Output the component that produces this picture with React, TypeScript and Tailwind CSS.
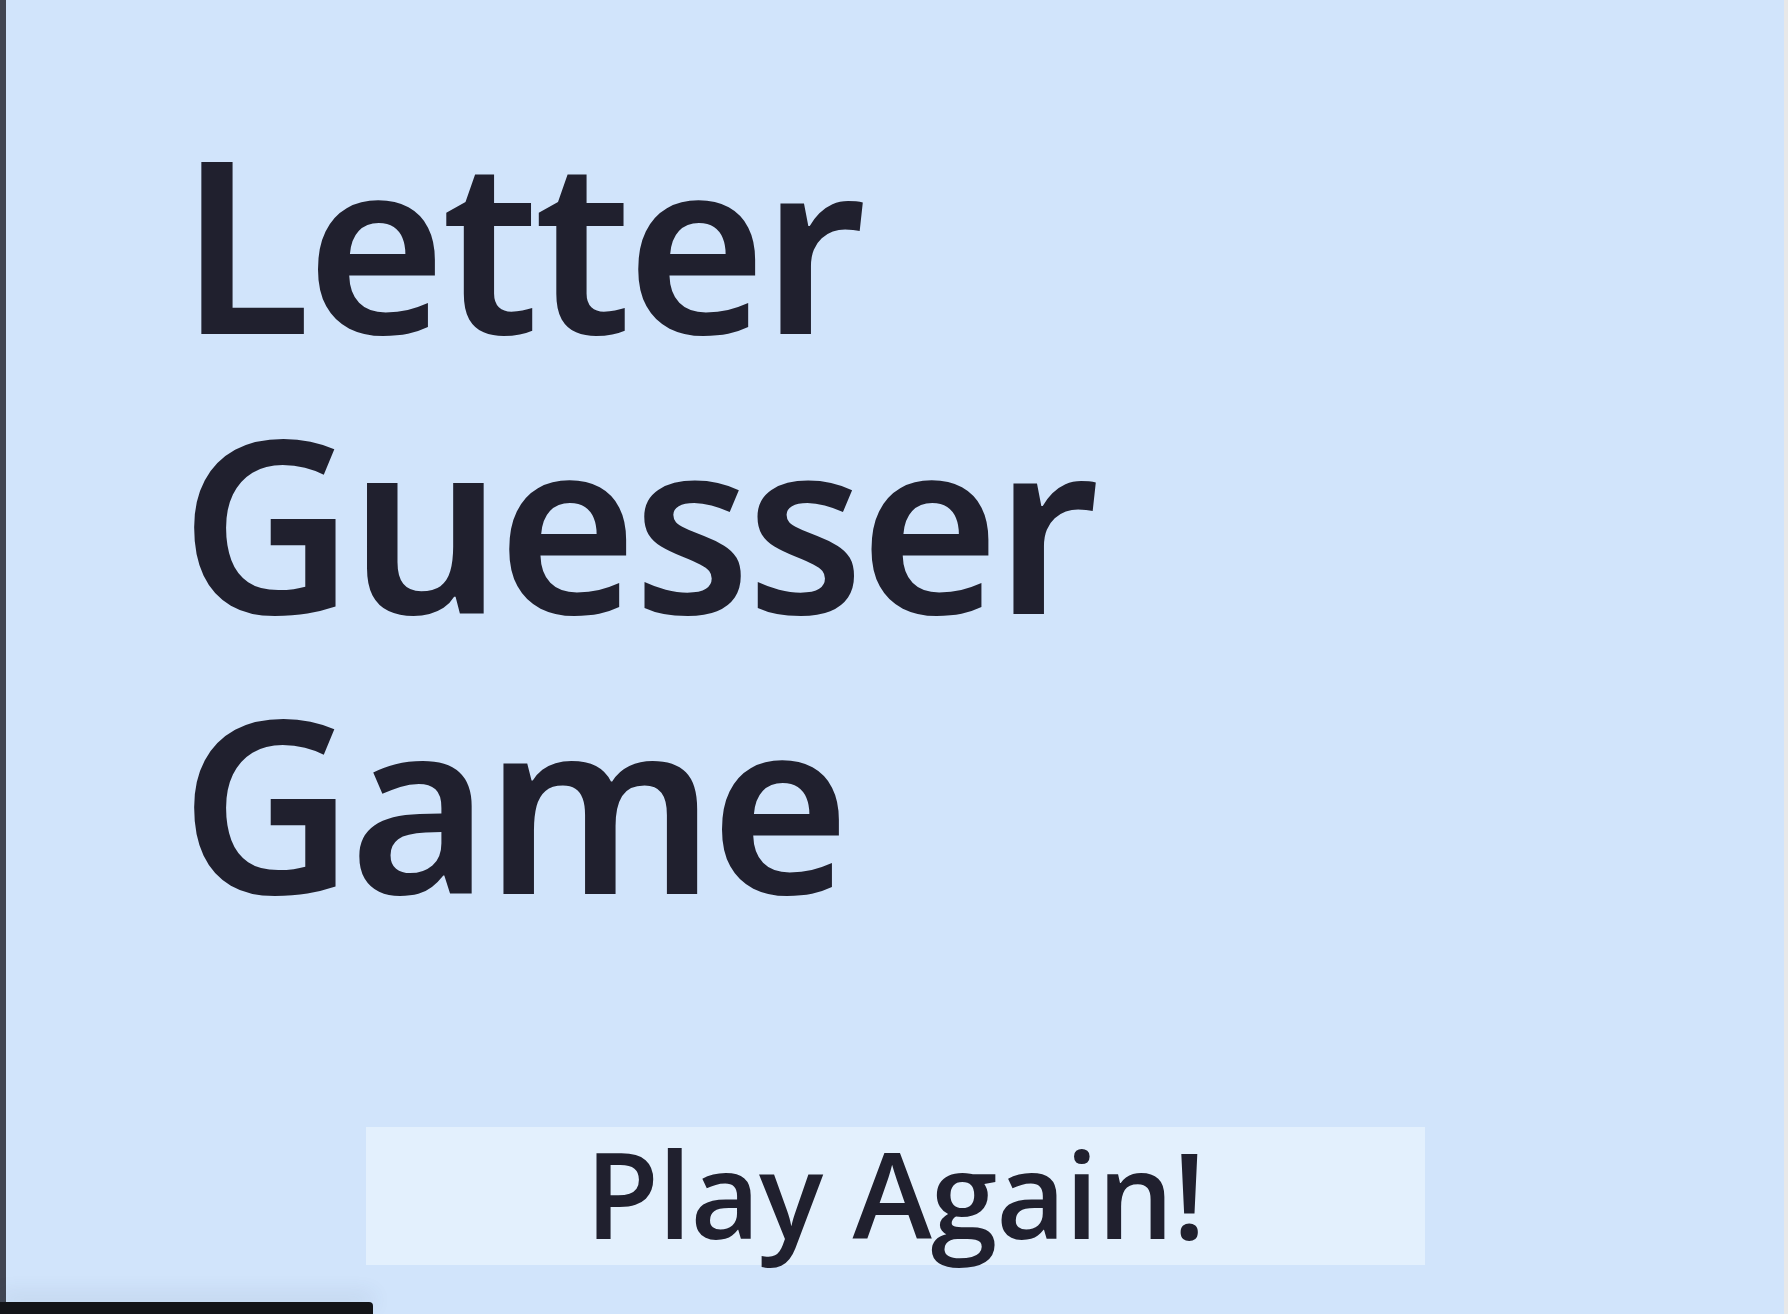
export default function App() {
  return (
    <div className="relative flex h-[1314px] w-full overflow-hidden bg-[#d1e4fb]">
      {/* left edge */}
      <div className="w-[6px] shrink-0 bg-[#414552]" />

      <main className="flex flex-1 flex-col">
        <h1
          className="ml-[174px] mt-[101px] w-[1000px] text-[240px] font-semibold leading-[280px] tracking-[-5px] text-[#20202e]"
          style={{ fontFamily: '"Noto Sans", "Open Sans", sans-serif' }}
        >
          Letter Guesser Game
        </h1>

        <div className="mt-[186px] flex justify-center">
          <button
            className="flex h-[138px] w-[1059px] items-center justify-center bg-[#e3f0fd] pb-[7px] text-[120px] font-semibold leading-none tracking-[-1px] text-[#20202e]"
            style={{ fontFamily: '"Open Sans", "Noto Sans", sans-serif' }}
          >
            Play Again!
          </button>
        </div>
      </main>

      {/* scrollbar strip */}
      <div className="w-[4px] shrink-0 bg-[#e8e8e8]" />

      {/* bottom overlay bar */}
      <div className="absolute bottom-0 left-0 h-[12px] w-[373px] rounded-tr-[4px] bg-[#131418] shadow-[0_-8px_20px_rgba(60,80,110,0.12)]" />
    </div>
  );
}
